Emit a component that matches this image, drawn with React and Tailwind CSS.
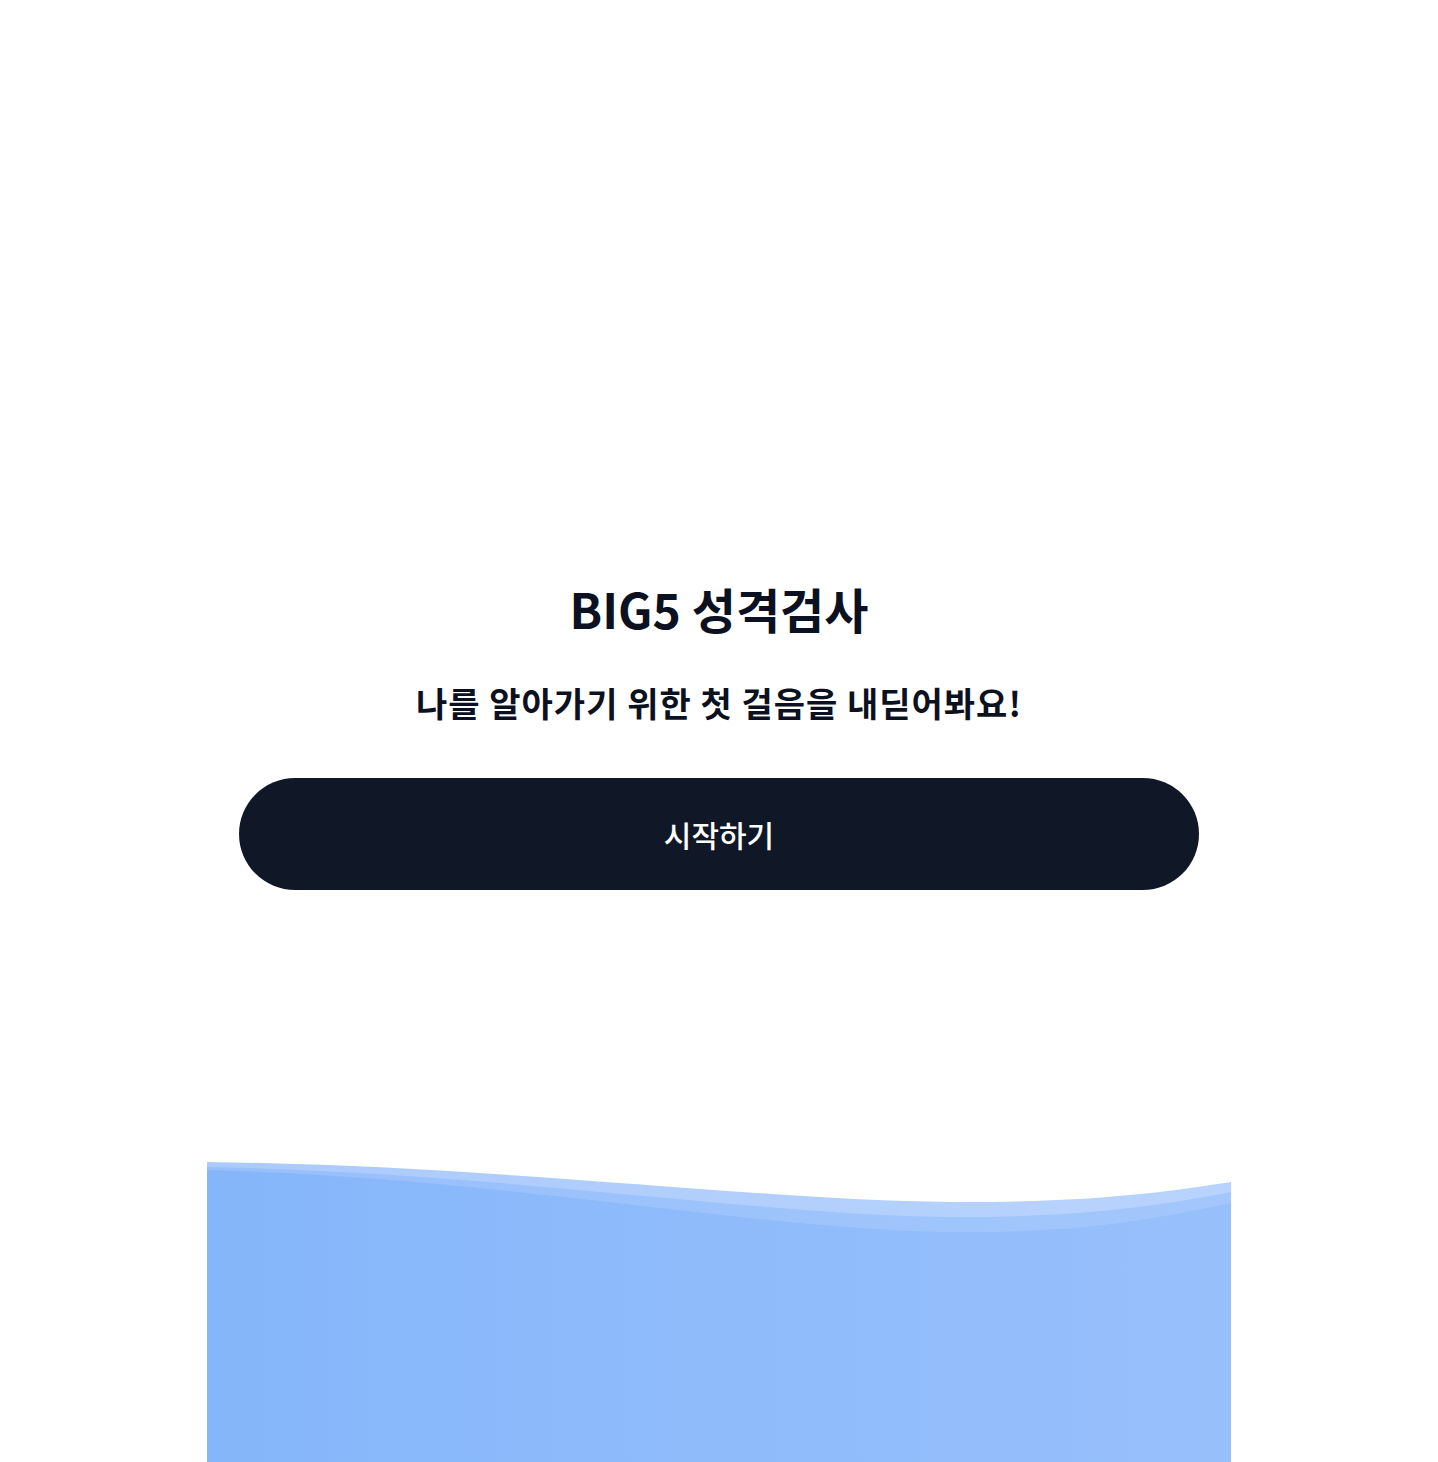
import React from "react";

const FONT = { fontFamily: '"Noto Sans CJK KR", "Noto Sans", sans-serif' };

function Wave() {
  return (
    <svg
      className="block w-full h-full"
      viewBox="0 0 1024 302"
      preserveAspectRatio="none"
    >
      <defs>
        <linearGradient id="body" x1="0" y1="0" x2="1" y2="0">
          <stop offset="0" stopColor="#85b6fa" />
          <stop offset="0.5" stopColor="#8fbbfb" />
          <stop offset="1" stopColor="#97c0fb" />
        </linearGradient>
        <linearGradient id="mid" x1="0" y1="0" x2="1" y2="0">
          <stop offset="0" stopColor="#97bffb" />
          <stop offset="1" stopColor="#a3c7fc" />
        </linearGradient>
        <linearGradient id="top" x1="0" y1="0" x2="1" y2="0">
          <stop offset="0" stopColor="#abcafc" />
          <stop offset="1" stopColor="#b8d3fd" />
        </linearGradient>
      </defs>
      <path
        d="M0,2 C300,6 550,40 743,42 C880,43 960,32 1024,22 L1024,302 L0,302 Z"
        fill="url(#top)"
      />
      <path
        d="M0,7 C300,13 550,55 743,57 C880,58 960,44 1024,32 L1024,302 L0,302 Z"
        fill="url(#mid)"
      />
      <path
        d="M0,10 C300,18 550,70 743,72 C880,74 960,56 1024,43 L1024,302 L0,302 Z"
        fill="url(#body)"
      />
    </svg>
  );
}

export default function App() {
  return (
    <div className="min-h-screen bg-white flex flex-col items-center" style={FONT}>
      <div className="w-full max-w-5xl flex-1 flex flex-col">
        <main className="px-8 pt-[583px] flex flex-col items-center text-center">
          <h1 className="text-5xl leading-[50px] font-bold text-[#0b1120]">
            BIG5 성격검사
          </h1>
          <p className="mt-[50px] text-[34px] leading-[40px] tracking-[1px] font-bold text-[#0b1120]">
            나를 알아가기 위한 첫 걸음을 내딛어봐요!
          </p>
          <button className="mt-[55px] w-full h-[112px] rounded-full bg-gray-900 text-white text-[30px] font-medium">
            시작하기
          </button>
        </main>
        <div className="mt-auto h-[302px]">
          <Wave />
        </div>
      </div>
    </div>
  );
}
